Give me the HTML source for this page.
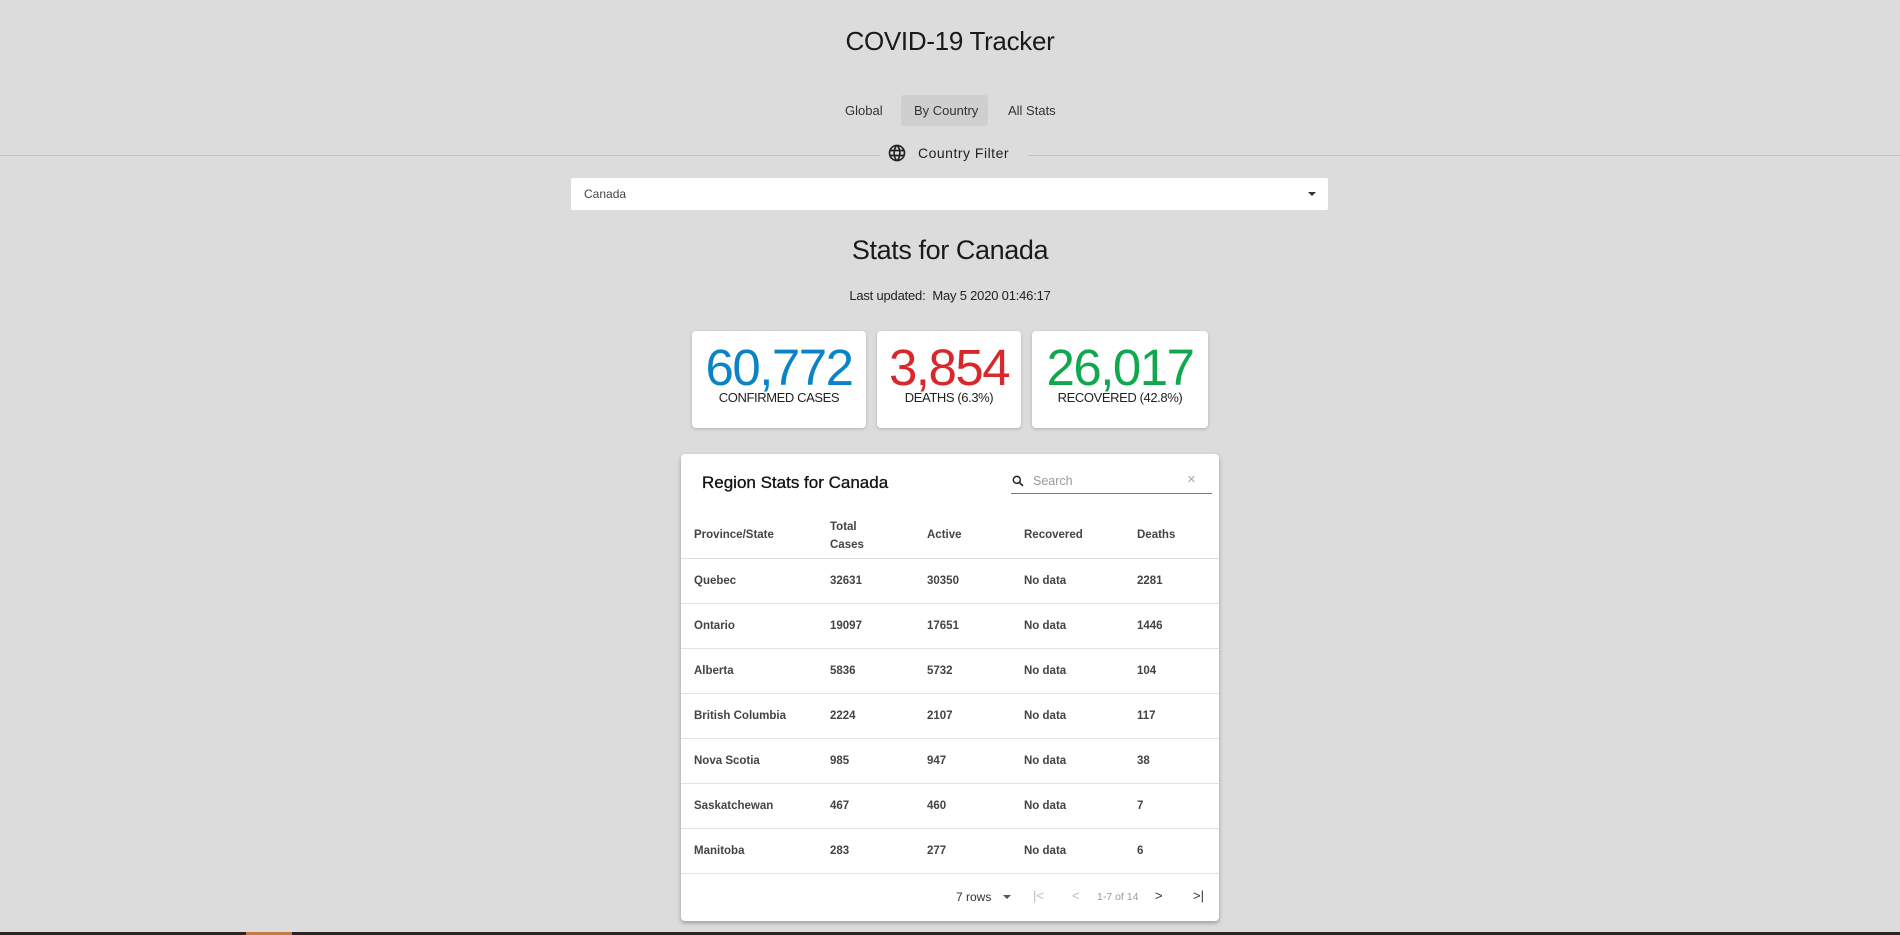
<!DOCTYPE html>
<html><head><meta charset="utf-8"><style>
*{margin:0;padding:0;box-sizing:border-box}
body{width:1900px;height:935px;background:#dcdcdc;font-family:"Liberation Sans",sans-serif;position:relative;overflow:hidden;color:#222}
.a{position:absolute}
.c{text-align:center}
.card{background:#fff;border-radius:4px;box-shadow:0 1px 3px rgba(0,0,0,.2)}
.num{position:absolute;left:0;right:0;top:7px;text-align:center;font-size:51px;letter-spacing:-1.5px}
.lbl{position:absolute;left:0;right:0;top:59px;text-align:center;font-size:13px;color:#222;letter-spacing:-.4px}
.tb{font-size:11.5px;font-weight:bold;color:#444}
.row{position:absolute;left:0;right:0;height:45px;border-bottom:1px solid #e2e2e2}
.row span{position:absolute;top:16px}
</style></head><body>
<div class="a c" style="left:0;right:0;top:26px;font-size:26px;color:#1a1a1a;letter-spacing:-.3px">COVID-19 Tracker</div>
<div class="a" style="left:845px;top:103px;font-size:13px;color:#333">Global</div>
<div class="a" style="left:901px;top:95px;width:87px;height:31px;background:#cfcfcf;border-radius:3px"></div>
<div class="a" style="left:914px;top:103px;font-size:13px;color:#333">By Country</div>
<div class="a" style="left:1008px;top:103px;font-size:13px;color:#333">All Stats</div>
<div class="a" style="left:0;right:0;top:155px;border-top:1px solid #c4c4c4"></div>
<div class="a" style="left:880px;top:140px;width:148px;height:28px;background:#dcdcdc"></div>
<svg class="a" style="left:887px;top:143px" width="20" height="20" viewBox="0 0 24 24"><path fill="#222" d="M12 2a10 10 0 100 20 10 10 0 000-20zm6.9 6h-2.9a15.7 15.7 0 00-1.4-3.6A8 8 0 0118.9 8zM12 4c.8 1.2 1.5 2.5 1.9 4h-3.8c.4-1.4 1.1-2.8 1.9-4zM4.3 14a8 8 0 010-4h3.4a16 16 0 000 4H4.3zm.8 2h3a15.7 15.7 0 001.4 3.6A8 8 0 015.1 16zm3-8h-3a8 8 0 014.3-3.6C8.8 5.5 8.4 6.7 8.1 8zM12 20c-.8-1.2-1.5-2.5-1.9-4h3.8c-.4 1.4-1.1 2.8-1.9 4zm2.3-6H9.7a14.700 14.700 0 010-4h4.6a14.700 14.700 0 010 4zm.3 5.6c.6-1.1 1.1-2.300 1.400-3.600h3a8 8 0 01-4.400 3.600zM16.3 14a16 16 0 000-4h3.400a8 8 0 010 4h-3.400z"/></svg>
<div class="a" style="left:918px;top:145px;font-size:14px;color:#222;letter-spacing:.5px">Country Filter</div>
<div class="a" style="left:571px;top:178px;width:757px;height:32px;background:#fff;border-radius:2px"></div>
<div class="a" style="left:584px;top:187px;font-size:12px;color:#444">Canada</div>
<div class="a" style="left:1308px;top:192px;border-left:4px solid transparent;border-right:4px solid transparent;border-top:4px solid #333"></div>
<div class="a c" style="left:0;right:0;top:235px;font-size:27px;color:#1a1a1a;letter-spacing:-.4px">Stats for Canada</div>
<div class="a c" style="left:0;right:0;top:288px;font-size:13px;color:#222;letter-spacing:-.2px">Last updated:&nbsp; May 5 2020 01:46:17</div>
<div class="a card" style="left:692px;top:331px;width:174px;height:97px"><div class="num" style="color:#0a84c6">60,772</div><div class="lbl">CONFIRMED CASES</div></div>
<div class="a card" style="left:877px;top:331px;width:144px;height:97px"><div class="num" style="color:#d8282c">3,854</div><div class="lbl">DEATHS (6.3%)</div></div>
<div class="a card" style="left:1032px;top:331px;width:176px;height:97px"><div class="num" style="color:#10a84e">26,017</div><div class="lbl">RECOVERED (42.8%)</div></div>
<div class="a card" style="left:681px;top:454px;width:538px;height:467px;box-shadow:0 2px 4px rgba(0,0,0,.3)">
<div class="a" style="left:21px;top:19px;font-size:17px;color:#111;-webkit-text-stroke:.3px #111">Region Stats for Canada</div>
<svg class="a" style="left:330px;top:20px" width="14" height="14" viewBox="0 0 24 24"><circle cx="10" cy="10" r="6" fill="none" stroke="#222" stroke-width="2.5"/><path d="M14.5 14.5l6 6" stroke="#222" stroke-width="2.8"/></svg>
<div class="a" style="left:352px;top:20px;font-size:12.5px;color:#999">Search</div>
<div class="a" style="left:506px;top:17px;font-size:15px;color:#aaa">×</div>
<div class="a" style="left:330px;top:39px;width:201px;border-top:1px solid #777"></div>
<div class="row tb" style="top:60px;height:45px;border-bottom:1px solid #ddd"><span style="left:13px;top:15px">Province/State</span><span style="left:149px;top:4px;line-height:18px">Total<br>Cases</span><span style="left:246px;top:15px">Active</span><span style="left:343px;top:15px">Recovered</span><span style="left:456px;top:15px">Deaths</span></div>
<div class="tb">
<div class="row" style="top:105px"><span style="left:13px">Quebec</span><span style="left:149px">32631</span><span style="left:246px">30350</span><span style="left:343px">No data</span><span style="left:456px">2281</span></div>
<div class="row" style="top:150px"><span style="left:13px">Ontario</span><span style="left:149px">19097</span><span style="left:246px">17651</span><span style="left:343px">No data</span><span style="left:456px">1446</span></div>
<div class="row" style="top:195px"><span style="left:13px">Alberta</span><span style="left:149px">5836</span><span style="left:246px">5732</span><span style="left:343px">No data</span><span style="left:456px">104</span></div>
<div class="row" style="top:240px"><span style="left:13px">British Columbia</span><span style="left:149px">2224</span><span style="left:246px">2107</span><span style="left:343px">No data</span><span style="left:456px">117</span></div>
<div class="row" style="top:285px"><span style="left:13px">Nova Scotia</span><span style="left:149px">985</span><span style="left:246px">947</span><span style="left:343px">No data</span><span style="left:456px">38</span></div>
<div class="row" style="top:330px"><span style="left:13px">Saskatchewan</span><span style="left:149px">467</span><span style="left:246px">460</span><span style="left:343px">No data</span><span style="left:456px">7</span></div>
<div class="row" style="top:375px"><span style="left:13px">Manitoba</span><span style="left:149px">283</span><span style="left:246px">277</span><span style="left:343px">No data</span><span style="left:456px">6</span></div>
</div>
<div class="a" style="left:275px;top:436px;font-size:12px;color:#333">7 rows</div>
<div class="a" style="left:322px;top:441px;border-left:4px solid transparent;border-right:4px solid transparent;border-top:4px solid #555"></div>
<div class="a" style="left:352px;top:434px;font-size:13px;color:#bbb">|&lt;</div>
<div class="a" style="left:391px;top:434px;font-size:13px;color:#bbb">&lt;</div>
<div class="a" style="left:416px;top:437px;font-size:10.5px;color:#999">1-7 of 14</div>
<div class="a" style="left:474px;top:434px;font-size:13px;color:#333">&gt;</div>
<div class="a" style="left:512px;top:434px;font-size:13px;color:#333">&gt;|</div>
</div>
<div class="a" style="left:0;top:932px;width:1900px;height:3px;background:#2a2522"></div>
<div class="a" style="left:246px;top:932px;width:46px;height:3px;background:#c97a3a"></div>
</body></html>
